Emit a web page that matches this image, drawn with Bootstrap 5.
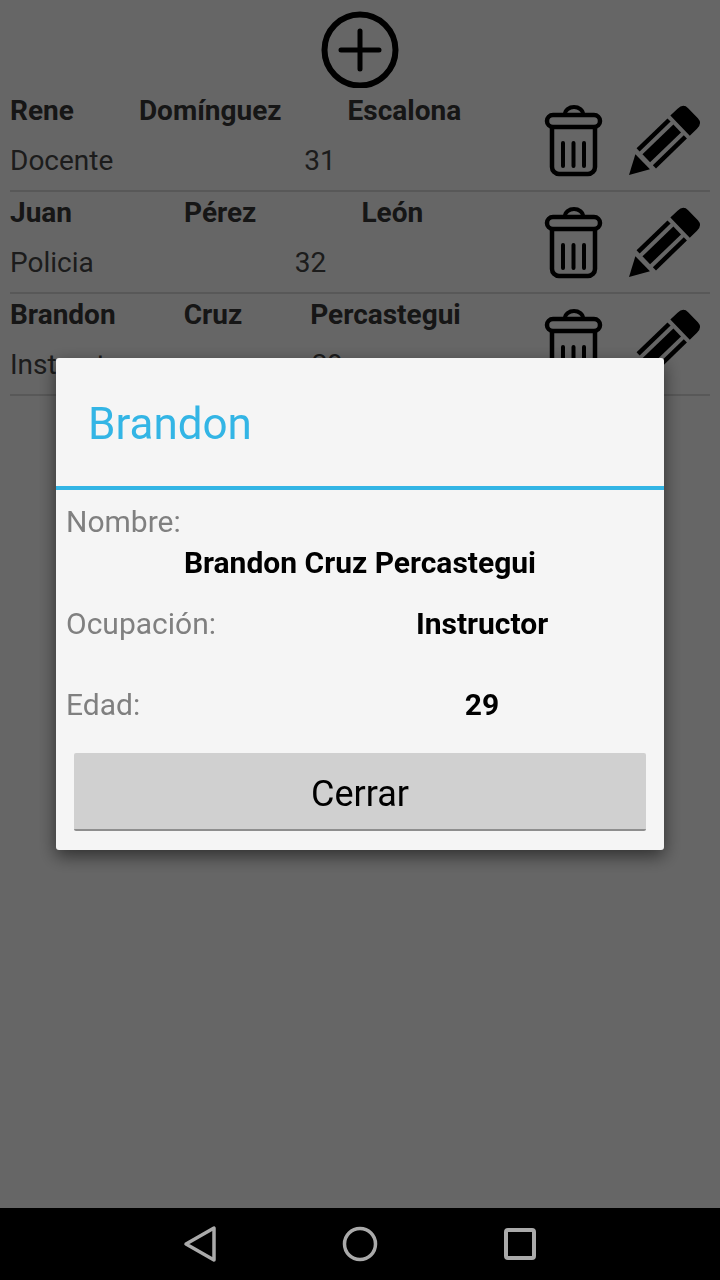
<!DOCTYPE html>
<html lang="en">
  <head>
    <meta charset="UTF-8" />
    <title>Personas</title>
    <meta name="viewport" content="width=device-width, initial-scale=1" />
    <link
      href="https://cdn.jsdelivr.net/npm/bootstrap@5.3.3/dist/css/bootstrap.min.css"
      rel="stylesheet"
    />
    <style>
      body {
        font-family: Roboto, sans-serif;
        background-color: #fff;
        height: 1280px;
        overflow: hidden;
      }
      .add-wrap {
        height: 90px;
        padding-top: 10px;
      }
      .person-row {
        height: 102px;
        margin: 0 10px;
        border-bottom: 2px solid #dcdcdc;
        font-size: 28px;
      }
      .person-text {
        width: 525px;
      }
      .line-one {
        height: 42px;
        line-height: 42px;
        font-weight: 700;
        color: #383838;
      }
      .line-two {
        height: 58px;
        line-height: 58px;
        color: #484848;
      }
      .r1 .n2 { margin-left: 65px; }
      .r1 .n3 { margin-left: 66px; }
      .r1 .age { margin-left: 191px; }
      .r2 .n2 { margin-left: 112px; }
      .r2 .n3 { margin-left: 105px; }
      .r2 .age { margin-left: 201px; }
      .r3 .n2 { margin-left: 68px; }
      .r3 .n3 { margin-left: 68px; }
      .r3 .age { margin-left: 181px; }
      .modal-backdrop.show {
        opacity: 0.6;
      }
      .dialog-box {
        max-width: none;
        width: 608px;
        margin: 358px auto 0;
      }
      .dialog-box .modal-content {
        background: #f5f5f5;
        border: 0;
        border-radius: 3px;
        box-shadow: 0 6px 18px rgba(0, 0, 0, 0.55);
      }
      .dialog-head {
        height: 132px;
        padding: 4px 32px 0;
        border-bottom: 4px solid #33b5e5;
        font-size: 44px;
        color: #33b5e5;
      }
      .dialog-body {
        padding-top: 13px;
        font-size: 30px;
        line-height: 38px;
        color: #808080;
      }
      .field-label {
        width: 244px;
        padding-left: 10px;
      }
      .full-name,
      .field-value {
        color: #000;
        font-weight: 700;
      }
      .full-name {
        margin-top: 3px;
      }
      .field-row {
        margin-top: 23px;
      }
      .field-row + .field-row {
        margin-top: 43px;
      }
      .close-btn {
        display: block;
        width: 572px;
        height: 78px;
        margin: 29px auto 0;
        padding-top: 10px;
        padding-bottom: 4px;
        background: #d0d0d0;
        border: 0;
        border-bottom: 2px solid #8e8e8e;
        border-radius: 2px;
        font-size: 36px;
        color: #000;
      }
      .dialog-foot {
        height: 19px;
      }
      .nav-strip {
        position: fixed;
        left: 0;
        right: 0;
        bottom: 0;
        height: 72px;
        background: #000;
        z-index: 1060;
      }
    </style>
  </head>
  <body>
    <div class="add-wrap d-flex justify-content-center">
      <svg width="78" height="78" viewBox="0 0 78 78">
        <circle cx="39" cy="40" r="35.500" fill="none" stroke="#000" stroke-width="6" />
        <path d="M20 40H58M39 21V59" stroke="#000" stroke-width="5" stroke-linecap="round" />
      </svg>
    </div>

    <!-- each row is the same, only the texts change -->
    <div class="person-row r1 d-flex">
      <div class="person-text">
        <div class="line-one d-flex"><span>Rene</span><span class="n2">Domínguez</span><span class="n3">Escalona</span></div>
        <div class="line-two d-flex"><span>Docente</span><span class="age">31</span></div>
      </div>
      <svg width="175" height="100" viewBox="535 90 175 100">
        <use href="#trash-pencil" />
      </svg>
    </div>
    <div class="person-row r2 d-flex">
      <div class="person-text">
        <div class="line-one d-flex"><span>Juan</span><span class="n2">Pérez</span><span class="n3">León</span></div>
        <div class="line-two d-flex"><span>Policia</span><span class="age">32</span></div>
      </div>
      <svg width="175" height="100" viewBox="535 90 175 100">
        <use href="#trash-pencil" />
      </svg>
    </div>
    <div class="person-row r3 d-flex">
      <div class="person-text">
        <div class="line-one d-flex"><span>Brandon</span><span class="n2">Cruz</span><span class="n3">Percastegui</span></div>
        <div class="line-two d-flex"><span>Instructor</span><span class="age">29</span></div>
      </div>
      <svg width="175" height="100" viewBox="535 90 175 100">
        <use href="#trash-pencil" />
      </svg>
    </div>

    <svg width="0" height="0" class="d-block">
      <defs>
        <g id="trash-pencil">
          <path d="M565 114a9 7 0 0 1 18 0" fill="none" stroke="#000" stroke-width="4" />
          <rect x="547" y="115" width="53" height="12" rx="6" fill="none" stroke="#000" stroke-width="4.500" />
          <path d="M552 127V167a7 7 0 0 0 7 7H588a7 7 0 0 0 7-7V127" fill="none" stroke="#000" stroke-width="4.500" />
          <path d="M563 143V166M573.500 143V166M584 143V166" stroke="#000" stroke-width="4" stroke-linecap="round" />
          <g transform="translate(629 175) rotate(-44)">
            <path d="M0 0L19 -10.500L19 10.500Z" fill="#000" />
            <rect x="24" y="-14" width="43" height="4.500" fill="#000" />
            <rect x="24" y="-5.500" width="43" height="11" fill="#000" />
            <rect x="24" y="9.500" width="43" height="4.500" fill="#000" />
            <path d="M71 -14H81Q89 -14 89 -7V7Q89 14 81 14H71Z" fill="#000" />
          </g>
        </g>
      </defs>
    </svg>

    <div class="modal-backdrop show"></div>
    <div class="modal d-block" tabindex="-1">
      <div class="modal-dialog dialog-box">
        <div class="modal-content">
          <div class="dialog-head d-flex align-items-center">Brandon</div>
          <div class="dialog-body">
            <div class="field-label">Nombre:</div>
            <div class="full-name text-center">Brandon Cruz Percastegui</div>
            <div class="field-row d-flex">
              <span class="field-label">Ocupación:</span>
              <span class="field-value flex-grow-1 text-center">Instructor</span>
            </div>
            <div class="field-row d-flex">
              <span class="field-label">Edad:</span>
              <span class="field-value flex-grow-1 text-center">29</span>
            </div>
            <button type="button" class="btn close-btn">Cerrar</button>
            <div class="dialog-foot"></div>
          </div>
        </div>
      </div>
    </div>

    <div class="nav-strip d-flex align-items-center justify-content-center">
      <svg width="400" height="72" viewBox="160 1208 400 72">
        <path d="M214 1228V1260L186 1244Z" fill="none" stroke="#aaa" stroke-width="3.500" stroke-linejoin="round" />
        <circle cx="360" cy="1244" r="15.500" fill="none" stroke="#aaa" stroke-width="3.500" />
        <rect x="506" y="1230" width="28" height="28" rx="2" fill="none" stroke="#aaa" stroke-width="4" />
      </svg>
    </div>
    <script src="https://cdn.jsdelivr.net/npm/bootstrap@5.3.3/dist/js/bootstrap.bundle.min.js"></script>
  </body>
</html>
